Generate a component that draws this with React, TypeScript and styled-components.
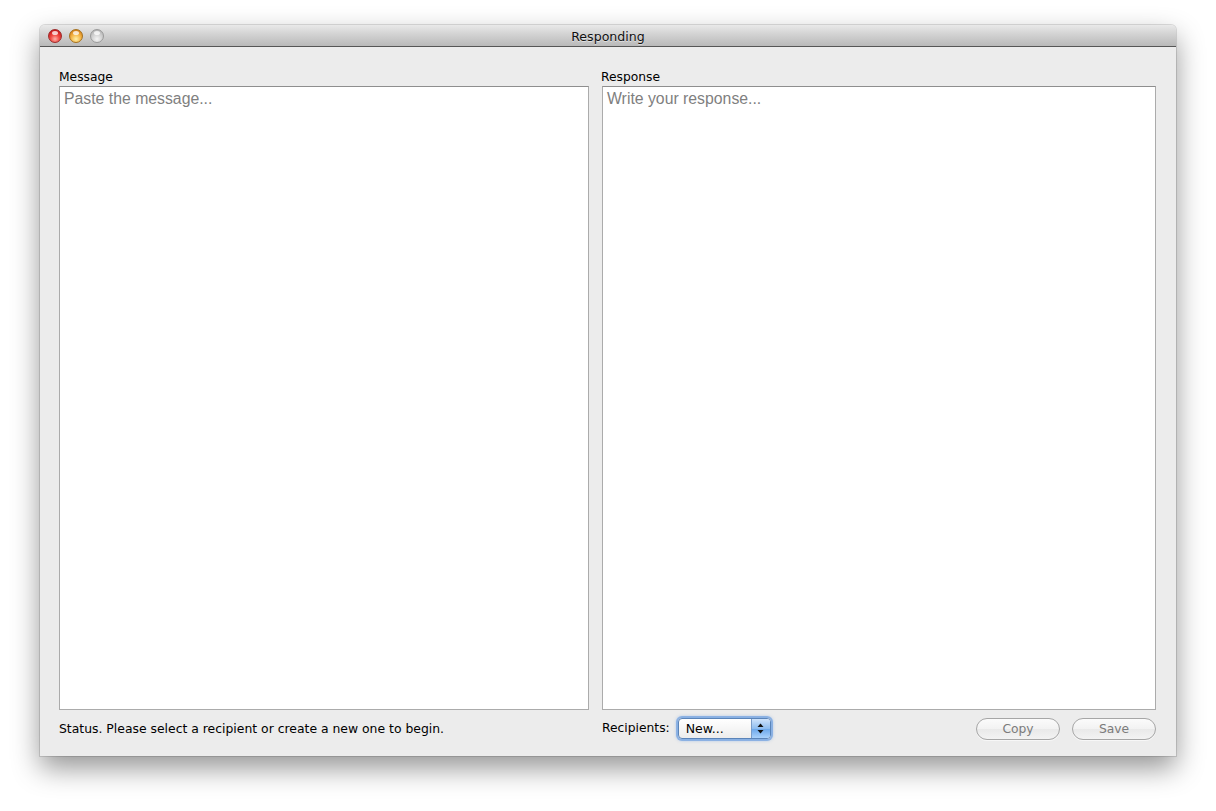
import React from "react";
import styled, { createGlobalStyle } from "styled-components";

const Global = createGlobalStyle`
  html, body { margin: 0; padding: 0; background: #ffffff; }
  body { font-family: "DejaVu Sans", "Liberation Sans", sans-serif; }
  * { box-sizing: border-box; }
`;

const Page = styled.div`
  padding: 25px 40px 0 40px;
  width: 1216px;
  height: 811px;
  overflow: hidden;
`;

const Window = styled.div`
  width: 1136px;
  height: 731px;
  background: #ececec;
  border-radius: 5px 5px 0 0;
  box-shadow: 0 12px 28px rgba(0, 0, 0, 0.42), 0 0 0 1px rgba(0, 0, 0, 0.12);
  display: flex;
  flex-direction: column;
`;

const TitleBar = styled.div`
  position: relative;
  height: 22px;
  flex: none;
  border-radius: 5px 5px 0 0;
  background: linear-gradient(#e9e9e9, #d2d2d2 45%, #b9b9b9);
  border-bottom: 1px solid #565656;
  display: flex;
  align-items: center;
  justify-content: center;
`;

const Lights = styled.div`
  position: absolute;
  left: 8px;
  top: 4px;
  display: flex;
  gap: 7px;
`;

const Light = styled.span<{ $c: "red" | "yellow" | "gray" }>`
  width: 14px;
  height: 14px;
  border-radius: 50%;
  border: 1px solid
    ${(p) => (p.$c === "red" ? "#9c2a2a" : p.$c === "yellow" ? "#a5701c" : "#9a9a9a")};
  background: ${(p) =>
    p.$c === "red"
      ? "radial-gradient(circle at 50% 75%, #ffb0a8 0%, #f04b43 40%, #c9191b 80%, #8e1212 100%)"
      : p.$c === "yellow"
      ? "radial-gradient(circle at 50% 75%, #fff1a8 0%, #f5b647 45%, #d8841c 80%, #9a5a10 100%)"
      : "radial-gradient(circle at 50% 75%, #f4f4f4 0%, #cfcfcf 50%, #b3b3b3 85%, #9d9d9d 100%)"};
  position: relative;
  &::after {
    content: "";
    position: absolute;
    left: 3px;
    top: 1px;
    width: 6px;
    height: 4px;
    border-radius: 50%;
    background: rgba(255, 255, 255, 0.75);
  }
`;

const Title = styled.div`
  font-size: 12.6px;
  padding-top: 2px;
  color: #111;
  text-shadow: 0 1px 0 rgba(255, 255, 255, 0.5);
`;

const Content = styled.div`
  flex: 1;
  display: grid;
  grid-template-columns: 530px 554px;
  grid-template-rows: 16px 624px 1fr;
  column-gap: 13px;
  row-gap: 1px;
  padding: 22px 20px 0 19px;
`;

const Label = styled.div<{ $shift?: number }>`
  font-size: 12.3px;
  line-height: 16px;
  color: #000;
  margin-left: ${(p) => p.$shift ?? 0}px;
`;

const TextArea = styled.textarea`
  width: 100%;
  height: 100%;
  resize: none;
  margin: 0;
  border: 1px solid #ababab;
  border-top-color: #8e8e8e;
  background: #fff;
  padding: 2px 4px;
  font-family: "Liberation Sans", Arial, sans-serif;
  font-size: 15.8px;
  line-height: 19px;
  color: #000;
  outline: none;
  &::placeholder {
    color: #7f7f7f;
  }
`;

const Status = styled.div`
  font-size: 12.4px;
  color: #000;
  padding-top: 10px;
`;

const BottomRight = styled.div`
  display: flex;
  align-items: flex-start;
  padding-top: 7px;
`;

const SmallLabel = styled.span`
  font-size: 12.3px;
  color: #000;
  margin-top: 3px;
  margin-right: 8px;
`;

const Popup = styled.div`
  width: 93px;
  height: 21px;
  border-radius: 4px;
  border: 1px solid #5a84b9;
  box-shadow: 0 0 0 2px rgba(120, 165, 225, 0.75), 0 0 3px 2px rgba(120, 165, 225, 0.5);
  background: linear-gradient(#ffffff, #f6f6f6 50%, #ececec);
  display: flex;
  overflow: hidden;
`;

const PopupText = styled.span`
  flex: 1;
  font-size: 12.5px;
  line-height: 19px;
  padding-left: 7px;
  color: #000;
`;

const PopupArrows = styled.span`
  width: 19px;
  border-left: 1px solid #7a9cc8;
  background: linear-gradient(#cfe3fb, #8ebdf0 50%, #6aa6ea 51%, #a9d1fb);
  display: flex;
  align-items: center;
  justify-content: center;
`;

const Spacer = styled.div`
  flex: 1;
`;

const PushButton = styled.button`
  width: 84px;
  height: 22px;
  margin-left: 12px;
  border-radius: 11px;
  border: 1px solid #a6a6a6;
  background: linear-gradient(#fbfbfb, #f2f2f2 50%, #e9e9e9 51%, #f3f3f3);
  font-family: "DejaVu Sans", sans-serif;
  font-size: 12.3px;
  color: #7b7b7b;
  padding: 0;
  box-shadow: 0 1px 0 rgba(255, 255, 255, 0.6);
`;

export default function App() {
  return (
    <>
      <Global />
      <Page>
        <Window>
          <TitleBar>
            <Lights>
              <Light $c="red" />
              <Light $c="yellow" />
              <Light $c="gray" />
            </Lights>
            <Title>Responding</Title>
          </TitleBar>
          <Content>
            <Label>Message</Label>
            <Label $shift={-1}>Response</Label>
            <TextArea placeholder="Paste the message..." />
            <TextArea placeholder="Write your response..." />
            <Status>Status. Please select a recipient or create a new one to begin.</Status>
            <BottomRight>
              <SmallLabel>Recipients:</SmallLabel>
              <Popup>
                <PopupText>New...</PopupText>
                <PopupArrows>
                  <svg width="7" height="11" viewBox="0 0 7 11">
                    <path d="M3.5 0.5 L6.5 4 L0.5 4 Z" fill="#111" />
                    <path d="M3.5 10.5 L6.5 7 L0.5 7 Z" fill="#111" />
                  </svg>
                </PopupArrows>
              </Popup>
              <Spacer />
              <PushButton>Copy</PushButton>
              <PushButton>Save</PushButton>
            </BottomRight>
          </Content>
        </Window>
      </Page>
    </>
  );
}
